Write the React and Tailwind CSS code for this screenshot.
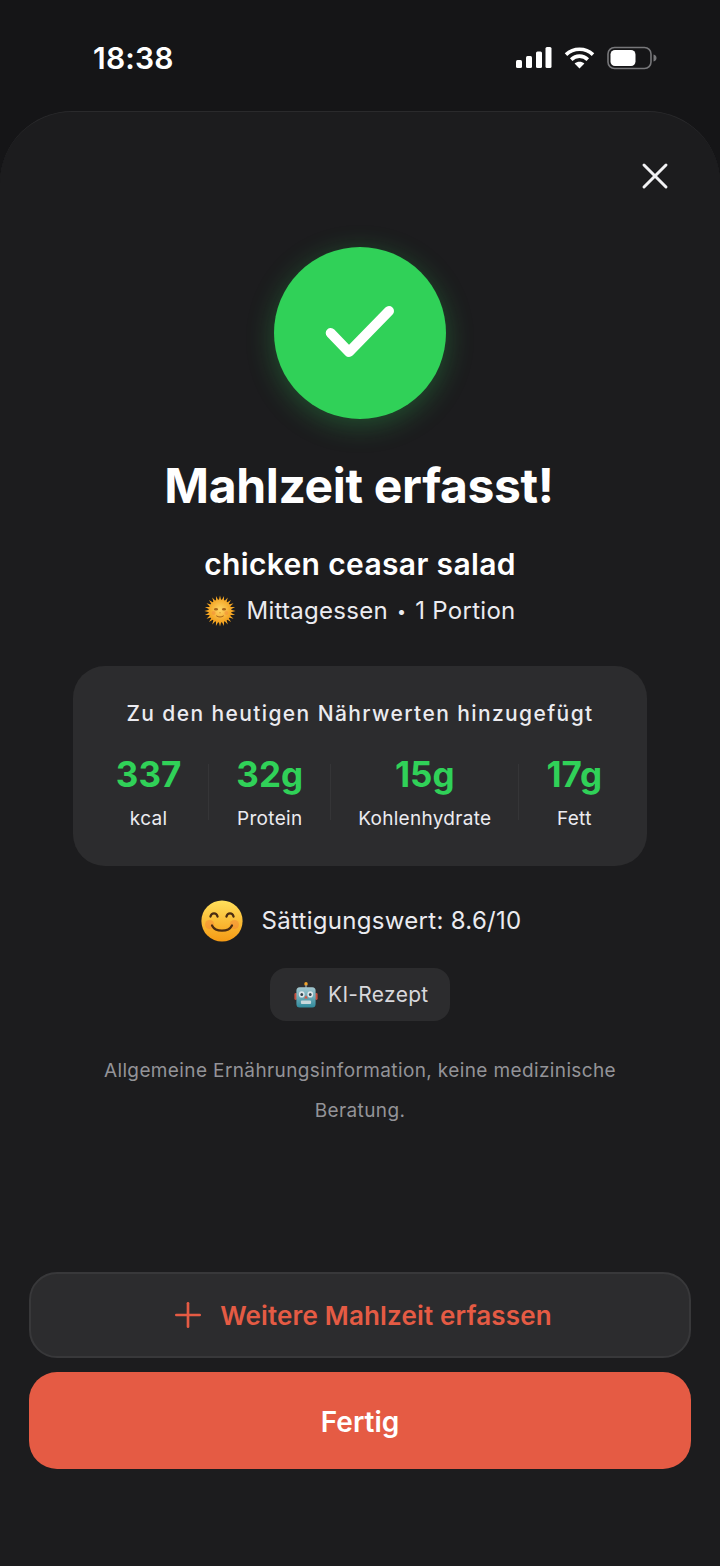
import React from 'react';
import { X, Plus } from 'lucide-react';

const stats = [
  { value: '337', label: 'kcal' },
  { value: '32g', label: 'Protein' },
  { value: '15g', label: 'Kohlenhydrate' },
  { value: '17g', label: 'Fett' },
];

function StatusIcons() {
  return (
    <div className="flex items-center">
      <svg width="36" height="24" viewBox="0 0 36 24" fill="#fff" className="mr-[12px]">
        <rect x="0" y="14" width="6" height="8" rx="1.5" />
        <rect x="10" y="10" width="6" height="12" rx="1.5" />
        <rect x="20" y="5.5" width="6" height="16.5" rx="1.5" />
        <rect x="29.5" y="1" width="6" height="21" rx="1.5" />
      </svg>
      <svg width="31" height="24" viewBox="0 0 31 24" fill="none" stroke="#fff" strokeWidth="3.6" className="mr-[12px]">
        <path d="M2 8.6 C9.5 1.4 21.5 1.4 29 8.6" />
        <path d="M7.2 13.6 C12 9 19 9 23.8 13.6" />
        <path d="M15.5 22.6 L10.6 17.6 C13.4 15.2 17.6 15.2 20.4 17.6 Z" fill="#fff" stroke="none" />
      </svg>
      <svg width="50" height="24" viewBox="0 0 50 24" fill="none">
        <rect x="1" y="1.5" width="43" height="21" rx="6.5" stroke="#77777a" strokeWidth="1.6" />
        <rect x="3.5" y="4" width="25" height="16" rx="4.5" fill="#fff" />
        <path d="M46.5 8.5 C48.5 9 49.5 10.4 49.5 12 C49.5 13.6 48.5 15 46.5 15.5 Z" fill="#77777a" />
      </svg>
    </div>
  );
}

function SunEmoji() {
  const rays = Array.from({ length: 24 }, (_, i) => i * 15);
  return (
    <svg width="32" height="32" viewBox="0 0 32 32">
      <defs>
        <radialGradient id="sunFace" cx="50%" cy="45%" r="55%">
          <stop offset="0%" stopColor="#ffd766" />
          <stop offset="100%" stopColor="#f2a01e" />
        </radialGradient>
      </defs>
      {rays.map((r) => (
        <path key={r} d="M16 0.4 L17.4 6 L14.6 6 Z" fill="#f5a623" transform={`rotate(${r} 16 16)`} />
      ))}
      <circle cx="16" cy="16" r="11.4" fill="url(#sunFace)" />
      <ellipse cx="12" cy="14.2" rx="2" ry="1.2" fill="#a8651a" />
      <ellipse cx="20" cy="14.2" rx="2" ry="1.2" fill="#a8651a" />
      <circle cx="9.6" cy="18" r="2" fill="#f4913a" opacity="0.6" />
      <circle cx="22.4" cy="18" r="2" fill="#f4913a" opacity="0.6" />
      <path d="M15 17.4 L17 17.4 L16 18.6 Z" fill="#c47a1f" />
      <path d="M12.6 21 C14.6 22.4 17.4 22.4 19.4 21" stroke="#a8651a" strokeWidth="1" fill="none" strokeLinecap="round" />
    </svg>
  );
}

function SmileEmoji() {
  return (
    <svg width="42" height="42" viewBox="0 0 42 42">
      <defs>
        <linearGradient id="smileFace" x1="0" y1="0" x2="0" y2="1">
          <stop offset="0%" stopColor="#ffe05c" />
          <stop offset="100%" stopColor="#f59a14" />
        </linearGradient>
      </defs>
      <circle cx="21" cy="21" r="20.6" fill="url(#smileFace)" />
      <circle cx="8.6" cy="24.5" r="4.6" fill="#f2703a" opacity="0.35" />
      <circle cx="33.4" cy="24.5" r="4.6" fill="#f2703a" opacity="0.35" />
      <path d="M9.4 16.6 C10.6 12.4 15.4 12.4 16.6 16.6" stroke="#4a2c12" strokeWidth="2.2" fill="none" strokeLinecap="round" />
      <path d="M25.4 16.6 C26.6 12.4 31.4 12.4 32.6 16.6" stroke="#4a2c12" strokeWidth="2.2" fill="none" strokeLinecap="round" />
      <path d="M11 25.4 C14.5 32.4 27.5 32.4 31 25.4" stroke="#4a2c12" strokeWidth="2.2" fill="none" strokeLinecap="round" />
    </svg>
  );
}

function RobotEmoji() {
  return (
    <svg width="24" height="26" viewBox="0 0 26 26" preserveAspectRatio="none">
      <defs>
        <linearGradient id="robotHead" x1="0" y1="0" x2="0" y2="1">
          <stop offset="0%" stopColor="#a5c8d0" />
          <stop offset="100%" stopColor="#2f8a9c" />
        </linearGradient>
      </defs>
      <circle cx="13" cy="1.9" r="1.9" fill="#f0a32c" />
      <rect x="12.2" y="3" width="1.6" height="3" fill="#8a97a0" />
      <rect x="0.4" y="11" width="3" height="7" rx="1.4" fill="#c8503e" />
      <rect x="22.6" y="11" width="3" height="7" rx="1.4" fill="#c8503e" />
      <rect x="2.6" y="5.2" width="20.8" height="20.4" rx="3.6" fill="url(#robotHead)" />
      <circle cx="8.4" cy="12.4" r="3.1" fill="#dfe7ea" />
      <circle cx="17.6" cy="12.4" r="3.1" fill="#dfe7ea" />
      <circle cx="8.4" cy="12.4" r="1.5" fill="#33454f" />
      <circle cx="17.6" cy="12.4" r="1.5" fill="#33454f" />
      <path d="M13 13.2 L15 16.4 L11 16.4 Z" fill="#d9533f" />
      <rect x="7.5" y="18.4" width="11" height="3.6" rx="1" fill="#c9d8dc" />
    </svg>
  );
}

export default function App() {
  return (
    <div className="flex flex-col w-[720px] h-[1566px] overflow-hidden bg-[#151517] text-white font-['Inter',sans-serif]">
      <div className="flex justify-between items-start h-[111px] pl-[93px] pr-[63px] pt-[39px]">
        <span className="text-[30px] leading-[38px] font-semibold tracking-[0.2px]">18:38</span>
        <div className="pt-[7px]">
          <StatusIcons />
        </div>
      </div>

      <div className="flex flex-col flex-1 items-center bg-[#1c1c1e] rounded-t-[72px] border-t border-[#2a2a2c]">
        <div className="flex justify-end w-full pt-[42px] pr-[43px]">
          <X size={44} strokeWidth={1.6} color="#f2f2f4" />
        </div>

        <div className="flex justify-center items-center w-[172px] h-[172px] mt-[49px] rounded-full bg-[#30d158] shadow-[0_6px_28px_rgba(48,209,88,0.3)]">
          <svg width="72" height="56" viewBox="0 0 72 56" fill="none" stroke="#fff" strokeWidth="10" strokeLinecap="round" strokeLinejoin="round">
            <path d="M6.7 28 L25 47 L65 6" />
          </svg>
        </div>

        <h1 className="mt-[36px] mr-[2px] text-[48px] leading-[62px] font-bold tracking-[-0.35px]">Mahlzeit erfasst!</h1>
        <div className="mt-[27px] text-[30px] leading-[40px] font-semibold tracking-[0.35px]">chicken ceasar salad</div>
        <div className="flex items-center mt-[11px] h-[32px] text-[24px] tracking-[0.28px] text-[#ebebf0]">
          <SunEmoji />
          <span className="ml-[10px]">Mittagessen</span>
          <span className="mx-[9px] text-[16px]">•</span>
          <span>1 Portion</span>
        </div>

        <div className="flex flex-col items-center w-[574px] h-[200px] mt-[39px] pt-[34px] rounded-[32px] bg-[#2c2c2e]">
          <div className="text-[21px] leading-[28px] font-medium tracking-[1.4px] text-[#ebebf0]">Zu den heutigen Nährwerten hinzugefügt</div>
          <div className="flex items-center gap-[27px] mt-[25px] mr-[2px]">
            {stats.map((s, i) => (
              <React.Fragment key={s.label}>
                {i > 0 && <div className="w-px h-[56px] bg-[#353537]" />}
                <div className="flex flex-col items-center">
                  <div className="text-[35px] leading-[42px] font-bold text-[#30d158]">{s.value}</div>
                  <div className="mt-[12px] text-[19px] leading-[24px] tracking-[0.3px] text-[#ebebf0]">{s.label}</div>
                </div>
              </React.Fragment>
            ))}
          </div>
        </div>

        <div className="flex items-center gap-[18px] mt-[34px] ml-[3px] h-[42px]">
          <SmileEmoji />
          <span className="text-[24px] tracking-[0.3px] text-[#ebebf0]">Sättigungswert: 8.6/10</span>
        </div>

        <div className="flex items-center gap-[10px] w-[180px] h-[53px] mt-[26px] pl-[24px] rounded-[16px] bg-[#2c2c2e]">
          <RobotEmoji />
          <span className="text-[21px] tracking-[0.3px] text-[#d8d8dc]">KI-Rezept</span>
        </div>

        <p className="w-[540px] mt-[30px] text-center text-[19px] leading-[40px] tracking-[0.38px] text-[#939398]">
          Allgemeine Ernährungsinformation, keine medizinische Beratung.
        </p>

        <div className="flex flex-col gap-[14px] w-[662px] mt-auto mb-[97px]">
          <button className="flex justify-center items-center gap-[12px] h-[86px] rounded-[28px] border-2 border-[#38383a] bg-[#2c2c2e] text-[#e55b44]">
            <Plus size={40} strokeWidth={1.6} />
            <span className="text-[26px] font-semibold tracking-[0.16px]">Weitere Mahlzeit erfassen</span>
          </button>
          <button className="h-[97px] pt-[2px] rounded-[28px] bg-[#e55b44] text-[28px] font-semibold text-white">Fertig</button>
        </div>
      </div>
    </div>
  );
}
